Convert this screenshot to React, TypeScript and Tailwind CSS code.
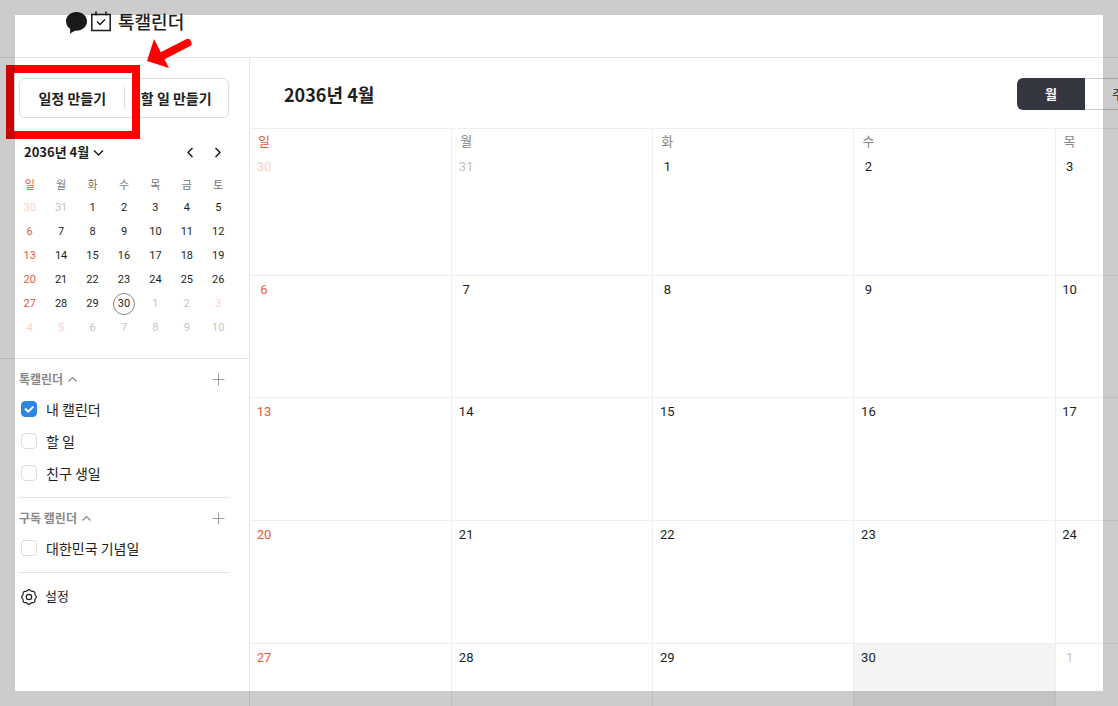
import { useState } from "react";

type Day = { n: number; out?: boolean; red?: boolean };

const WEEKDAYS = ["일", "월", "화", "수", "목", "금", "토"];
const HOLIDAYS = ["5/3", "5/5"];
const FONT = "font-['Noto_Sans_CJK_KR',sans-serif]";
const NUM = "font-[Roboto,sans-serif]";

// 2036년 4월: 3/30 부터 6주
function buildWeeks(): Day[][] {
  const weeks: Day[][] = [];
  for (let w = 0; w < 6; w++) {
    const row: Day[] = [];
    for (let d = 0; d < 7; d++) {
      const i = w * 7 + d - 1;
      if (i < 1) row.push({ n: i + 31, out: true, red: d === 0 });
      else if (i > 30) row.push({ n: i - 30, out: true, red: d === 0 || HOLIDAYS.includes(`5/${i - 30}`) });
      else row.push({ n: i, red: d === 0 });
    }
    weeks.push(row);
  }
  return weeks;
}

const weeks = buildWeeks();

function dayColor(day: Day) {
  if (day.red) return day.out ? "text-[#fbd0c8]" : "text-[#e65a41]";
  return day.out ? "text-[#c4c4c4]" : "text-[#1e1e1e]";
}

export default function App() {
  return (
    <div className={`relative flex h-screen flex-col overflow-hidden bg-white text-[#1e1e1e] ${FONT}`}>
      <Header />
      <div className="flex min-h-0 flex-1">
        <Sidebar />
        <MonthView />
      </div>
      <Highlight />
      <div className="pointer-events-none absolute inset-0 border-[15px] border-black/20" />
    </div>
  );
}

function Header() {
  return (
    <header className="h-[58px] shrink-0 border-b border-[#e5e5e5] pl-[66px]">
      <a href="#" className="flex h-11 w-fit items-center gap-[7px] text-lg font-medium">
        <Logo />
        <span className="pb-0.5">톡캘린더</span>
      </a>
    </header>
  );
}

function Sidebar() {
  return (
    <aside className="w-[250px] shrink-0 border-r border-[#e5e5e5] pt-5">
      <div className="mr-5 ml-[19px] grid h-10 grid-cols-2 items-center rounded-md border border-[#dcdcdc] pl-px text-sm font-bold">
        <button className="h-[22px] border-r border-[#dcdcdc]">일정 만들기</button>
        <button className="h-[22px]">할 일 만들기</button>
      </div>

      <MiniCalendar />

      <div className="mr-5 ml-[19px]">
        <CalendarGroup title="톡캘린더" items={["내 캘린더", "할 일", "친구 생일"]} initial={["내 캘린더"]} />
        <CalendarGroup title="구독 캘린더" items={["대한민국 기념일"]} initial={[]} />
        <button className="mt-3 flex h-6 items-center gap-2 pl-[2px] text-[13px]">
          <GearIcon />
          <span className="pb-0.5">설정</span>
        </button>
      </div>
    </aside>
  );
}

function MiniCalendar() {
  return (
    <section className="border-b border-[#e5e5e5] pt-[22px] pr-[15px] pb-[18px] pl-[14px]">
      <div className="flex h-6 items-center pr-[10px] pl-[10px]">
        <button className="flex items-center gap-1 text-[13px] font-bold">
          2036년 4월
          <Chevron d="M1 3.5 5.5 8 10 3.5" />
        </button>
        <div className="ml-auto flex gap-[14px]">
          <button aria-label="이전 달" className="px-px">
            <Chevron d="M7.5 1 3 5.5 7.5 10" />
          </button>
          <button aria-label="다음 달" className="px-px">
            <Chevron d="M3.5 1 8 5.5 3.5 10" />
          </button>
        </div>
      </div>
      <table className="mt-[10px] w-full table-fixed border-separate border-spacing-0 text-center text-[11px]">
        <thead>
          <tr>
            {WEEKDAYS.map((w, i) => (
              <th key={w} className={`h-[22px] p-0 pb-0.5 font-normal ${i === 0 ? "text-[#e65a41]" : "text-[#777]"}`}>
                {w}
              </th>
            ))}
          </tr>
        </thead>
        <tbody className={NUM}>
          {weeks.map((row, i) => (
            <tr key={i}>
              {row.map((day, d) => (
                <td key={d} className={`h-6 p-0 ${dayColor(day)}`}>
                  <button
                    className={[
                      "mx-auto flex size-[22px] items-center justify-center rounded-full",
                      day.n === 30 && !day.out ? "border border-[#888]" : "",
                    ].join(" ")}
                  >
                    {day.n}
                  </button>
                </td>
              ))}
            </tr>
          ))}
        </tbody>
      </table>
    </section>
  );
}

function CalendarGroup({ title, items, initial }: { title: string; items: string[]; initial: string[] }) {
  const [checked, setChecked] = useState<string[]>(initial);

  function toggle(name: string) {
    setChecked((prev) => (prev.includes(name) ? prev.filter((v) => v !== name) : [...prev, name]));
  }

  return (
    <section className="border-b border-[#e5e5e5] pt-[9px] pb-2">
      <div className="flex h-[22px] items-center justify-between pr-1">
        <button className="flex items-center gap-1 text-xs font-bold text-[#888]">
          {title}
          <Chevron d="M1.5 7.5 5.5 3.5 9.5 7.5" thin />
        </button>
        <button aria-label={`${title} 추가`} className="text-[#999]">
          <svg width="13" height="13" viewBox="0 0 13 13" stroke="currentColor" fill="none">
            <path d="M6.5 .5v12M.5 6.5h12" />
          </svg>
        </button>
      </div>
      <div className="mt-[3px]">
        {items.map((name) => (
          <label key={name} className="flex h-8 items-center gap-[9px] pl-[2px] text-sm">
            <span className="grid">
              <input
                type="checkbox"
                checked={checked.includes(name)}
                onChange={() => toggle(name)}
                className="col-start-1 row-start-1 size-4 appearance-none rounded border border-[#dcdcdc] bg-white checked:border-[#2d87e2] checked:bg-[#2d87e2]"
              />
              {checked.includes(name) && (
                <svg className="pointer-events-none col-start-1 row-start-1" width="16" height="16" viewBox="0 0 16 16" fill="none" stroke="white" strokeWidth="2">
                  <path d="M4 7.5 7.2 10.7 12.3 5.6" />
                </svg>
              )}
            </span>
            <span className="pb-px">{name}</span>
          </label>
        ))}
      </div>
    </section>
  );
}

function MonthView() {
  return (
    <main className="min-w-0 flex-1">
      <div className="flex h-[70px] items-center justify-between pt-0.5 pl-[34px]">
        <h1 className="pb-px text-lg font-bold">2036년 4월</h1>
        <div className="-mr-[35px] flex h-8 shrink-0 text-[13px]">
          <button className="w-[68px] rounded-l-md bg-[#353740] font-bold text-white">월</button>
          <button className="w-[68px] border-y border-[#ccc] pr-0.5">주</button>
        </div>
      </div>
      <table className="w-full min-w-[1408px] table-fixed border-separate border-spacing-0">
        <thead>
          <tr>
            {WEEKDAYS.map((w, i) => (
              <th
                key={w}
                className={`h-6 border-t border-[#eee] p-0 text-left text-[13px] leading-5 font-normal ${i === 0 ? "text-[#e65a41]" : "border-l text-[#888]"}`}
              >
                <span className="ml-[2px] block w-6 text-center">{w}</span>
              </th>
            ))}
          </tr>
        </thead>
        <tbody className={NUM}>
          {weeks.slice(0, 5).map((row, r) => (
            <tr key={r}>
              {row.map((day, d) => (
                <td
                  key={d}
                  className={[
                    "border-[#eee] p-0 align-top text-[13px] leading-5",
                    r === 1 ? "h-[122px]" : "h-[123px]",
                    r > 0 ? "border-t pt-1" : "pt-[5px]",
                    d > 0 ? "border-l" : "",
                    day.n === 30 && !day.out ? "bg-[#f4f4f4]" : "",
                    dayColor(day),
                  ].join(" ")}
                >
                  <span className="ml-[2px] block w-6 text-center">{day.n}</span>
                </td>
              ))}
            </tr>
          ))}
        </tbody>
      </table>
    </main>
  );
}

// 일정 만들기 안내 표시
function Highlight() {
  return (
    <div className="pointer-events-none absolute top-[65px] left-[6px] h-[74px] w-[134px] border-8 border-[red]">
      <svg className="absolute -top-[38px] left-[132px]" width="48" height="34" viewBox="0 0 48 34">
        <path d="M16 21 41.5 8" stroke="red" strokeWidth="8" strokeLinecap="round" />
        <path d="M1 26 8 4 23 33Z" fill="red" />
      </svg>
    </div>
  );
}

function Logo() {
  return (
    <svg width="45" height="24" viewBox="0 0 45 24" fill="none">
      <path
        d="M10.5 2C4.7 2 0 6 0 11.2c0 3.3 1.8 6 4.2 7.6L4 23.5l5-2.8c.5.1 1 .1 1.5.1C16.3 20.8 21 16.5 21 11.3S16.3 2 10.5 2Z"
        fill="#1a1a1a"
      />
      <path d="M25.8 4.5h18.4v16H25.8Z M30 1.5v4 M40 1.5v4" stroke="#1a1a1a" strokeWidth="1.5" />
      <path d="M31 11.5l3 3 5-5" stroke="#1a1a1a" strokeWidth="1.5" />
    </svg>
  );
}

function Chevron({ d, thin }: { d: string; thin?: boolean }) {
  return (
    <svg width="11" height="11" viewBox="0 0 11 11" fill="none" stroke="currentColor" strokeWidth={thin ? 1.2 : 1.5}>
      <path d={d} />
    </svg>
  );
}

function GearIcon() {
  return (
    <svg width="16" height="16" viewBox="0 0 16 16" fill="none" stroke="#1e1e1e" strokeWidth="1.2">
      <path
        d="M6.5 1.5Q8 -.1 9.5 1.5Q10.3 2.6 11.7 2.4Q13.9 2.3 13.9 4.5Q13.7 5.8 14.7 6.6Q16 8 14.7 9.4Q13.7 10.2 13.9 11.5Q13.9 13.7 11.7 13.6Q10.3 13.4 9.5 14.5Q8 16.1 6.5 14.5Q5.7 13.4 4.3 13.6Q2.1 13.7 2.1 11.5Q2.3 10.2 1.3 9.4Q0 8 1.3 6.6Q2.3 5.8 2.1 4.5Q2.1 2.3 4.3 2.4Q5.7 2.6 6.5 1.5Z"
        strokeLinejoin="round"
      />
      <circle cx="8" cy="8" r="2.7" />
    </svg>
  );
}
